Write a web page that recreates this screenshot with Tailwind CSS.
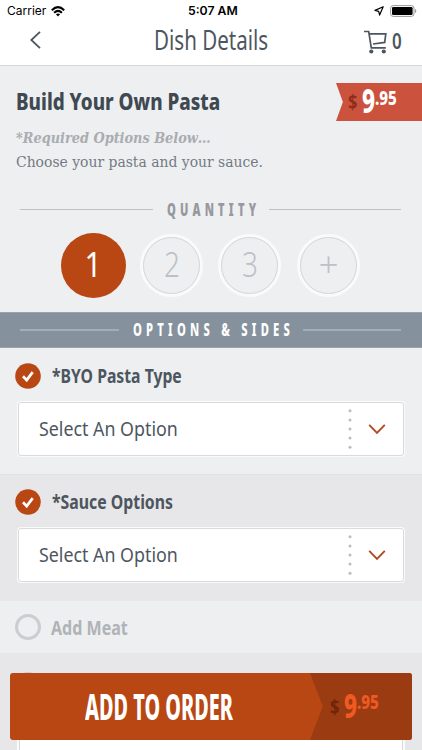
<!DOCTYPE html>
<html lang="en">
<head>
<meta charset="utf-8">
<meta name="viewport" content="width=device-width, initial-scale=1">
<title>Dish Details</title>
<script src="https://cdn.jsdelivr.net/npm/@tailwindcss/browser@4"></script>
</head>
<body class="bg-[#eeeff1]">
<div class="relative w-[422px] h-[750px] overflow-hidden bg-[#eeeff1] font-['Noto_Sans','Open_Sans',sans-serif] text-[#4d565f]">

  <header class="h-[66px] bg-white border-b border-[#d6d7d9]">
    <div class="h-[22px] flex items-center pl-[7px] pr-[5px] font-['Inter',sans-serif] text-black text-xs leading-[22px]">
      <div class="w-[39px]"><span data-fit class="inline-block origin-left whitespace-nowrap">Carrier</span></div>
      <svg class="ml-[5px] w-[14px] h-[11px]" viewBox="0 0 14 11" fill="none" stroke="#000" stroke-width="2"><path d="M.8 4.2Q7-1.9 13.2 4.2M3.1 6.7Q7 3 10.9 6.7"/><path d="M4.9 8.3Q7 6.5 9.1 8.3L7 10.5Z" fill="#000" stroke="none"/></svg>
      <div class="ml-[123px] w-[50px] font-semibold"><span data-fit class="inline-block origin-left whitespace-nowrap">5:07 AM</span></div>
      <svg class="ml-auto w-[10px] h-[10px]" viewBox="0 0 10 10" fill="none" stroke="#000" stroke-width="1.2" stroke-linejoin="round"><path d="M9.2.8 1 4.4l3.7.9.9 3.8Z"/></svg>
      <svg class="ml-[6px] w-[27px] h-[12px]" viewBox="0 0 27 12"><rect x=".6" y=".6" width="23.4" height="10.8" rx="2.6" fill="none" stroke="#999"/><rect x="2" y="2" width="20.6" height="8" rx="1.3"/><path d="M25 4v4q1.3-.5 1.3-2T25 4Z" fill="#999"/></svg>
    </div>
    <div class="h-[36px] flex items-center">
      <svg class="ml-[29px] w-[13px] h-[20px]" viewBox="0 0 13 20" fill="none" stroke="#4d565f" stroke-width="1.8"><path d="M11 1.8 2.3 10 11 18.2"/></svg>
      <h1 class="ml-[112px] -mt-px w-[114px] text-[26.5px] leading-[36px] font-normal"><span data-fit class="inline-block origin-left whitespace-nowrap">Dish Details</span></h1>
      <svg class="ml-[96px] mt-[3px] w-[24px] h-[24px]" viewBox="0 0 24 24" fill="none" stroke="#4d565f" stroke-width="1.7"><path d="M0 1.5h4.7L7.3 17.8h14.5M5.2 3.8h16.6l-1.1 8.6L9 14"/><g fill="#4d565f" stroke="none"><circle cx="7.3" cy="21.5" r="2.1"/><circle cx="19.8" cy="21.5" r="2.1"/></g></svg>
      <div class="ml-[4px] w-[10px] text-[22px] leading-[36px] font-semibold"><span data-fit class="inline-block origin-left">0</span></div>
    </div>
  </header>

  <section class="h-[246px]">
    <div class="h-[108px] flex justify-between">
      <div class="pl-4 pt-[20px]">
        <h2 class="w-[204px] text-[23px] leading-[30px] font-extrabold text-[#3f4951]"><span data-fit class="inline-block origin-left whitespace-nowrap">Build Your Own Pasta</span></h2>
        <p class="mt-[10px] w-[195px] text-[15px] leading-[24px] font-bold italic text-[#a9acb0] font-['DejaVu_Serif',serif]"><span data-fit class="inline-block origin-left whitespace-nowrap">*Required Options Below…</span></p>
        <p class="w-[247px] text-[15.5px] leading-[24px] text-[#737b83] font-['DejaVu_Serif',serif]"><span data-fit class="inline-block origin-left whitespace-nowrap">Choose your pasta and your sauce.</span></p>
      </div>
      <div class="mt-[17px] h-[38px] w-[86px] flex pl-[12px] bg-[#cb523c] [clip-path:polygon(0_0,100%_0,100%_100%,0_100%,8%_50%)] font-extrabold text-white">
        <div class="w-[9px] text-[20px] leading-[37px] font-bold text-[#8d2d1b]"><span data-fit class="inline-block origin-left">$</span></div>
        <div class="ml-[5px] w-[13px] text-[33px] leading-[36px]"><span data-fit class="inline-block origin-left">9</span></div>
        <div class="w-[22px] text-[20px] leading-[30px]"><span data-fit class="inline-block origin-left">.95</span></div>
      </div>
    </div>
    <div class="h-[71px] flex items-center pl-5 pr-[21px] text-[#96999e]">
      <div class="w-[133px] h-px bg-[#bfc1c4]"></div>
      <div class="ml-[14px] w-[93px] text-[17px] leading-[24px] font-black"><span data-fit class="inline-block origin-left whitespace-nowrap tracking-[.38em]">QUANTITY</span></div>
      <div class="ml-auto w-[132px] h-px bg-[#bfc1c4]"></div>
    </div>
    <div class="-mt-[12px] h-[64px] flex items-center pl-[61px] text-[35px] leading-[54px] font-light text-[#bcc1c8]">
      <div class="size-[65px] rounded-full bg-[#b84714] flex justify-center items-center text-white font-normal"><span class="inline-block -mt-[3px] scale-x-[.86]">1</span></div>
      <div class="ml-[14px] size-[63px] rounded-full border-[3px] border-[#f9fafb]"><div class="size-[57px] rounded-full border border-[#d5d7d9] flex justify-center items-center"><span class="inline-block -mt-[2px] scale-x-[.8]">2</span></div></div>
      <div class="ml-[15px] size-[63px] rounded-full border-[3px] border-[#f9fafb]"><div class="size-[57px] rounded-full border border-[#d5d7d9] flex justify-center items-center"><span class="inline-block -mt-[2px] scale-x-[.8]">3</span></div></div>
      <div class="ml-[16px] size-[63px] rounded-full border-[3px] border-[#f9fafb]"><div class="size-[57px] rounded-full border border-[#d5d7d9] flex justify-center items-center"><span class="inline-block -mt-[2px]">+</span></div></div>
    </div>
  </section>

  <div class="h-[36px] bg-[#85929d] border-y border-[#99a4ad] flex items-center pl-5 pr-[21px] text-white">
    <div class="w-[99px] h-[2px] bg-[#a3aeb6]"></div>
    <div class="ml-[14px] w-[161px] text-[17px] leading-[24px] font-extrabold"><span data-fit class="inline-block origin-left whitespace-nowrap tracking-[.38em]">OPTIONS &amp; SIDES</span></div>
    <div class="ml-auto w-[98px] h-[2px] bg-[#a3aeb6]"></div>
  </div>

  <section class="h-[126px] pt-[14px] pl-[15px]">
    <div class="h-[27px] flex items-center">
      <svg class="size-[26px]" viewBox="0 0 26 26"><circle cx="13" cy="13" r="12.8" fill="#b84714"/><path d="M8 13.2l3.7 3.9 6-8" fill="none" stroke="#fff" stroke-width="2.7"/></svg>
      <div class="ml-[11px] w-[130px] text-[20px] leading-[28px] font-bold"><span data-fit class="inline-block origin-left whitespace-nowrap">*BYO Pasta Type</span></div>
    </div>
    <div class="mt-[12px] ml-[2px] w-[388px] h-[56px] rounded-[4px] bg-[#f9fafb] p-px">
      <div class="h-[54px] rounded-[3px] border border-[#d9dadd] bg-white flex items-center pl-5 text-[20.5px] leading-[30px]">
        <div class="-mt-[2px] w-[139px]"><span data-fit class="inline-block origin-left whitespace-nowrap">Select An Option</span></div>
        <svg class="ml-[170px] w-[4px] h-[42px]" viewBox="0 0 4 42" fill="#bbbcbf"><circle cx="2" cy="2.8" r="1.5"/><circle cx="2" cy="11.9" r="1.5"/><circle cx="2" cy="21" r="1.5"/><circle cx="2" cy="30.1" r="1.5"/><circle cx="2" cy="39.2" r="1.5"/></svg>
        <svg class="ml-[16px] w-[18px] h-[12px]" viewBox="0 0 18 12" fill="none" stroke="#b04a23" stroke-width="1.9"><path d="M1.2 1.9 9 9.8l7.8-7.9"/></svg>
      </div>
    </div>
  </section>

  <section class="h-[127px] pt-[13px] pl-[15px] bg-[#e7e7e9] border-t border-[#e2e3e5]">
    <div class="h-[27px] flex items-center">
      <svg class="size-[26px]" viewBox="0 0 26 26"><circle cx="13" cy="13" r="12.8" fill="#b84714"/><path d="M8 13.2l3.7 3.9 6-8" fill="none" stroke="#fff" stroke-width="2.7"/></svg>
      <div class="ml-[11px] w-[121px] text-[20px] leading-[28px] font-bold"><span data-fit class="inline-block origin-left whitespace-nowrap">*Sauce Options</span></div>
    </div>
    <div class="mt-[12px] ml-[2px] w-[388px] h-[56px] rounded-[4px] bg-[#f9fafb] p-px">
      <div class="h-[54px] rounded-[3px] border border-[#d9dadd] bg-white flex items-center pl-5 text-[20.5px] leading-[30px]">
        <div class="-mt-[2px] w-[139px]"><span data-fit class="inline-block origin-left whitespace-nowrap">Select An Option</span></div>
        <svg class="ml-[170px] w-[4px] h-[42px]" viewBox="0 0 4 42" fill="#bbbcbf"><circle cx="2" cy="2.8" r="1.5"/><circle cx="2" cy="11.9" r="1.5"/><circle cx="2" cy="21" r="1.5"/><circle cx="2" cy="30.1" r="1.5"/><circle cx="2" cy="39.2" r="1.5"/></svg>
        <svg class="ml-[16px] w-[18px] h-[12px]" viewBox="0 0 18 12" fill="none" stroke="#b04a23" stroke-width="1.9"><path d="M1.2 1.9 9 9.8l7.8-7.9"/></svg>
      </div>
    </div>
  </section>

  <section class="h-[52px] flex items-center pl-[15px]">
    <div class="size-[26px] rounded-full border-[3px] border-[#cccdd0]"></div>
    <div class="ml-[10px] mt-[2px] w-[77px] text-[20px] leading-[28px] font-bold text-[#b0b3b7]"><span data-fit class="inline-block origin-left whitespace-nowrap">Add Meat</span></div>
  </section>

  <section class="h-[97px] bg-[#e7e7e9] pt-[19px] pl-[15px]">
    <div class="size-[26px] rounded-full border-[3px] border-[#cccdd0]"></div>
    <div class="mt-[13px] ml-[2px] w-[388px] h-[56px] rounded-[4px] bg-[#f9fafb] px-[2px] pt-px"><div class="h-[54px] border border-[#d9dadd] bg-white"></div></div>
  </section>

  <!-- Floating order button -->
  <button class="absolute left-[10px] top-[673px] w-[402px] h-[67px] rounded-[3px] overflow-hidden bg-[#b84714] flex items-center text-left text-white font-extrabold">
    <span class="block ml-[75px] w-[148px] text-[36px] leading-[64px]"><span data-fit class="inline-block origin-left whitespace-nowrap">ADD TO ORDER</span></span>
    <span class="ml-auto h-full w-[102px] flex pl-[20px] bg-[#9b3b12] [clip-path:polygon(0_0,100%_0,100%_100%,0_100%,12.5%_50%)] text-[#f05a22]">
      <span class="block w-[9px] text-[20px] leading-[68px] font-bold text-[#6e2509]"><span data-fit class="inline-block origin-left">$</span></span>
      <span class="block ml-[5px] w-[13px] text-[33px] leading-[66px]"><span data-fit class="inline-block origin-left">9</span></span>
      <span class="block w-[22px] text-[20px] leading-[58px]"><span data-fit class="inline-block origin-left">.95</span></span>
    </span>
  </button>
</div>
<script>
  // Condense each label horizontally to the width of its box, again whenever either one is resized.
  function fit(el) {
    if (el.offsetWidth) el.style.transform = 'scaleX(' + el.parentElement.clientWidth / el.offsetWidth + ')';
  }
  document.querySelectorAll('[data-fit]').forEach(function (el) {
    var observer = new ResizeObserver(function () { fit(el); });
    observer.observe(el);
    observer.observe(el.parentElement);
  });
  window.addEventListener('load', function () { document.querySelectorAll('[data-fit]').forEach(fit); });
</script>
</body>
</html>
